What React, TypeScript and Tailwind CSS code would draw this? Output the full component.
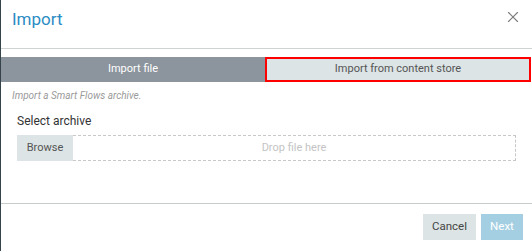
import { X } from "lucide-react";

const App = () => {
  return (
    <div className="flex w-[532px] h-[251px] bg-white font-['Roboto',sans-serif] overflow-hidden">
      {/* backdrop edge */}
      <div className="w-[1px] bg-[#34444a]" />

      <div className="flex-1 flex flex-col">
        {/* Header */}
        <div className="h-[49px] border-b border-[#cfd3d3] flex items-center justify-between pl-[11px] pr-[10px]">
          <h2 className="text-[17px] text-[#2b8cc4] -mt-[8px]">Import</h2>
          <button className="text-[#7d7d7d] -mt-[14px]">
            <X size={18} strokeWidth={1.5} />
          </button>
        </div>

        {/* Tabs */}
        <div className="flex h-[25px] mt-[8px] mr-[1px] text-[11px]">
          <div className="w-[264px] bg-[#8c959d] text-white flex items-center justify-center">
            Import file
          </div>
          <div className="flex-1 bg-[#dce4e5] border-2 border-[#ff0000] text-[#555] flex items-center justify-center">
            Import from content store
          </div>
        </div>

        <p className="mt-[6px] ml-[11px] text-[10px] italic text-[#9a9a9a]">
          Import a Smart Flows archive.
        </p>

        <div className="px-[16px] mt-[9px]">
          <div className="text-[12px] text-[#333]">Select archive</div>
          <div className="flex h-[26px] mt-[5px] text-[11px]">
            <button className="w-[56px] bg-[#dce4e5] text-[#555]">Browse</button>
            <div className="flex-1 border border-dashed border-[#c8c8c8] border-l-0 flex items-center justify-center text-[#c4c4c4]">
              Drop file here
            </div>
          </div>
        </div>

        {/* Footer */}
        <div className="mt-auto h-[48px] border-t border-[#c5cccc] flex items-start justify-end gap-[5px] pt-[10px] pr-[9px]">
          <button className="h-[26px] w-[53px] bg-[#dce4e5] text-[#444] text-[11.5px]">Cancel</button>
          <button className="h-[26px] w-[42px] bg-[#a4cfe2] text-white text-[11.5px]">Next</button>
        </div>
      </div>
    </div>
  );
};

export default App;
